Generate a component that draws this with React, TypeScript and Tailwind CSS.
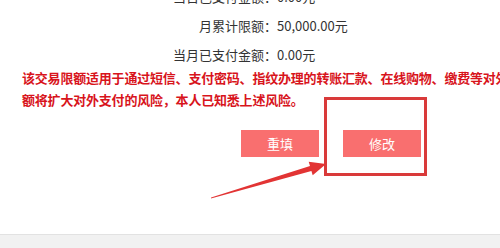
import React from "react";

const rows = [
  { label: "当日已支付金额：", value: "0.00元" },
  { label: "月累计限额：", value: "50,000.00元" },
  { label: "当月已支付金额：", value: "0.00元" },
];

export default function App() {
  return (
    <div
      className="relative w-[500px] h-[248px] overflow-hidden bg-white"
      style={{ fontFamily: '"Noto Sans CJK SC", "Noto Sans", sans-serif' }}
    >
      <div className="h-[234px] overflow-hidden">
        <div className="-mt-[18px] flex flex-col">
          {rows.map((r) => (
            <div key={r.label} className="flex h-[29px] items-center text-[13px] text-[#333]">
              <div className="w-[277px] text-right whitespace-nowrap">{r.label}</div>
              <div className="whitespace-nowrap">{r.value}</div>
            </div>
          ))}
          <div className="mt-[-2px] pl-[22px] text-[13px] leading-[22px] font-bold text-[#d8141c] tracking-[-0.2px] whitespace-nowrap">
            <div>该交易限额适用于通过短信、支付密码、指纹办理的转账汇款、在线购物、缴费等对外支付交易，提高限</div>
            <div>额将扩大对外支付的风险，本人已知悉上述风险。</div>
          </div>
          <div className="mt-[19px] flex gap-[24px] pl-[241px]">
            <button className="h-[27px] w-[78px] bg-[#f96f6f] text-[13px] text-white">重填</button>
            <button className="h-[27px] w-[78px] bg-[#f96f6f] text-[13px] text-white">修改</button>
          </div>
        </div>
      </div>
      <div className="h-[14px] border-t border-[#e2e2e2] bg-[#f1f1f1]" />
      <div className="absolute left-[324px] top-[97px] h-[79px] w-[103px] border-[3px] border-[#d93a3a]" />
      <svg className="absolute left-0 top-0" width="500" height="248" viewBox="0 0 500 248">
        <polygon
          points="211.1,197.5 310,166.1 308.7,161.8 326,164 312.7,175.2 311.4,170.9 210.9,198.5"
          fill="#e23434"
        />
      </svg>
    </div>
  );
}
